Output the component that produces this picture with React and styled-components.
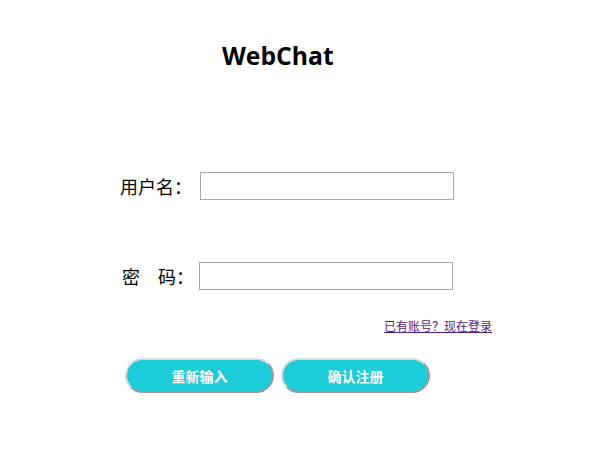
import React, { useState } from 'react';
import styled, { createGlobalStyle } from 'styled-components';

const GlobalStyle = createGlobalStyle`
  body {
    margin: 0;
    background: #fff;
    font-family: "Noto Sans CJK SC", "Noto Sans", sans-serif;
  }
`;

const Page = styled.div`
  width: 607px;
  height: 460px;
  display: flex;
  flex-direction: column;
`;

const Title = styled.h1`
  margin: 36px 0 0 222px;
  font-family: "Open Sans", "Noto Sans", sans-serif;
  font-size: 24.7px;
  font-weight: 700;
  line-height: 40px;
  color: #000;
`;

const Form = styled.form`
  display: flex;
  flex-direction: column;
  margin: 95px 0 0 120px;
`;

const Row = styled.div`
  display: flex;
  align-items: center;
  height: 30px;
  margin-top: ${(p) => p.$gap || 0}px;
`;

const Label = styled.label`
  font-size: 18px;
  line-height: 28px;
  width: ${(p) => p.$w}px;
  padding-left: ${(p) => p.$indent || 0}px;
  box-sizing: border-box;
  color: #000;
  white-space: pre;
`;

const Input = styled.input`
  width: 250px;
  height: 24px;
  border: 1px solid #a9a9a9;
  padding: 1px;
  outline: none;
`;

const LinkRow = styled.div`
  display: flex;
  justify-content: flex-end;
  width: 372px;
  margin-top: 26px;
`;

const Link = styled.a`
  font-size: 12px;
  color: #551a8b;
  text-decoration: underline;
  cursor: pointer;
`;

const Buttons = styled.div`
  display: flex;
  gap: 7px;
  margin: 24px 0 0 5px;
`;

const Button = styled.button`
  width: 149px;
  height: 35px;
  border-radius: 18px;
  border: 2px solid #dcdcdc;
  border-right-color: #9a9a9a;
  border-bottom-color: #9a9a9a;
  background: #1ecbd9;
  color: #fff;
  font-family: "Noto Sans CJK SC", sans-serif;
  font-size: 14px;
  font-weight: 700;
  cursor: pointer;
`;

export default function App() {
  const [user, setUser] = useState('');
  const [pwd, setPwd] = useState('');

  return (
    <Page>
      <GlobalStyle />
      <Title>WebChat</Title>
      <Form onSubmit={(e) => e.preventDefault()}>
        <Row>
          <Label $w={80}>用户名：</Label>
          <Input value={user} onChange={(e) => setUser(e.target.value)} />
        </Row>
        <Row $gap={60}>
          <Label $w={79} $indent={2}>密　码：</Label>
          <Input type="password" value={pwd} onChange={(e) => setPwd(e.target.value)} />
        </Row>
        <LinkRow>
          <Link>已有账号？现在登录</Link>
        </LinkRow>
        <Buttons>
          <Button type="button" onClick={() => { setUser(''); setPwd(''); }}>重新输入</Button>
          <Button type="submit">确认注册</Button>
        </Buttons>
      </Form>
    </Page>
  );
}
